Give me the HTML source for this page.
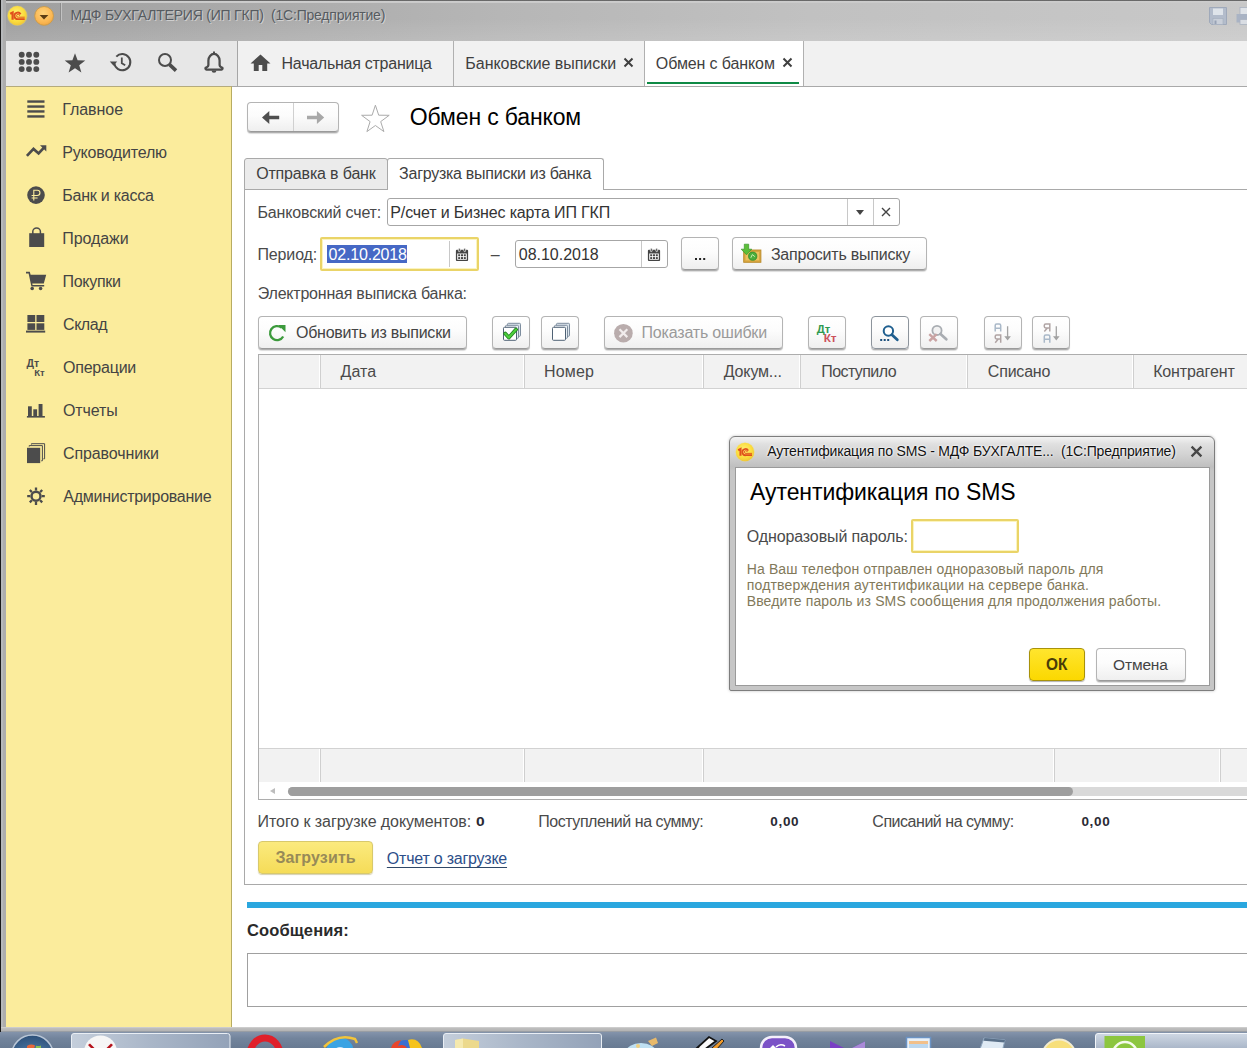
<!DOCTYPE html>
<html><head><meta charset="utf-8">
<style>
*{box-sizing:border-box;margin:0;padding:0}
html,body{width:1247px;height:1048px;overflow:hidden;background:#fff}
body{font-family:"Liberation Sans",sans-serif;font-size:16px;color:#4a4a4a;position:relative}
.a{position:absolute}
.t{position:absolute;white-space:nowrap;line-height:20px}
/* window chrome */
#titlebar{left:0;top:0;width:1247px;height:41px;background:linear-gradient(rgba(255,255,255,0) 0,rgba(255,255,255,.0) 45%,rgba(255,255,255,.12) 100%),linear-gradient(to right,#9f9f9f 0,#a9a9a9 18%,#b6b6b6 40%,#c1c1c1 65%,#c8c8c8 100%)}
#topline{left:0;top:0;width:1247px;height:3px;background:linear-gradient(#666 0,#6c6c6c 1.200px,#cdcdcd 1.200px,#cacaca 2.500px,rgba(200,200,200,0) 3px)}
#lborder{left:0;top:0;width:6px;height:1032px;background:linear-gradient(to right,#1a1a1a 0,#1a1a1a 1.200px,#b6b8ba 1.200px,#b6b8ba 3px,#adadad 3px)}
#lborder2{left:0;top:0;width:2px;height:1032px;background:#3c3c3c}
#toolbar{left:6px;top:41px;width:1241px;height:46px;background:#f1f1f1;border-bottom:1px solid #a9a9a9}
#tbleft{left:6px;top:41px;width:232px;height:45px;background:#e7e7e7;border-right:1px solid #a6a6a6}
#sidebar{left:6px;top:86px;width:226px;height:941px;background:#fbec9c;border-right:1px solid #b8ac62;border-top:1px solid #b5ab7c}
.mi{position:absolute;left:63px;white-space:nowrap;line-height:20px;font-size:16px;color:#444}
.btn{position:absolute;border:1px solid #b4b4b4;border-bottom-color:#9a9a9a;border-radius:4px;background:linear-gradient(#ffffff 0,#fcfcfc 45%,#efefef 100%);box-shadow:0 1px 0 rgba(0,0,0,.2),0 1.500px 1px rgba(0,0,0,.14)}
.fld{position:absolute;border:1px solid #a6a6a6;border-radius:3px;background:#fff}
</style></head><body>
<!-- chrome -->
<div class="a" id="titlebar"></div>
<div class="a" id="topline"></div>
<div class="a" id="toolbar"></div>
<div class="a" id="tbleft"></div>
<div class="a" id="sidebar"></div>
<div class="a" id="lborder"></div>


<!-- title bar content -->
<svg class="a" style="left:0;top:0" width="70" height="34" viewBox="0 0 70 34">
<defs>
<radialGradient id="g1c" cx=".45" cy=".4" r=".6"><stop offset="0" stop-color="#fff27a"/><stop offset=".7" stop-color="#fbdc3c"/><stop offset="1" stop-color="#efc63a"/></radialGradient>
<radialGradient id="gor" cx=".45" cy=".35" r=".65"><stop offset="0" stop-color="#ffd27a"/><stop offset=".75" stop-color="#fbb752"/><stop offset="1" stop-color="#f1a844"/></radialGradient>
</defs>
<circle cx="17.300" cy="15.700" r="10.300" fill="#f7e36a" opacity=".35"/>
<circle cx="17.300" cy="15.700" r="9.600" fill="url(#g1c)"/>
<g fill="none" stroke="#e0501c">
<path d="M10.200 13.800L12.600 12.500V19.700" stroke-width="2.200" stroke-linejoin="miter"/>
<path d="M20.600 14.200A3.300 3.300 0 1 0 18.200 19.100H24.700" stroke-width="1.900"/>
<path d="M19.600 15.800A1.500 1.500 0 1 0 18.300 17.200H24.700" stroke-width=".9"/>
</g>
<circle cx="44.100" cy="15.900" r="9.400" fill="url(#gor)" stroke="#c99a48" stroke-width=".9"/>
<path d="M39.600 14.900H48.400L44 19.500Z" fill="#5c3d14"/>
<path d="M60.500 3V21" stroke="#8c8c8c" stroke-width="1"/>
<path d="M61.500 3V21" stroke="#c2c2c2" stroke-width="1"/>
</svg>
<div class="t" style="left:70.38px;top:4.80px;letter-spacing:-0.210px;font-size:14px;color:#565b60;text-shadow:1px 1px 0 rgba(225,225,225,.7)">МДФ БУХГАЛТЕРИЯ (ИП ГКП)&nbsp; (1С:Предприятие)</div>


<svg class="a" style="left:1205px;top:4px" width="42" height="26" viewBox="1205 4 42 26">
<path d="M1209.500 7.500H1226.500V24.500H1211.500L1209.500 22.500Z" fill="#b3bccb" stroke="#9fa9ba" stroke-width="1"/>
<rect x="1213" y="8.500" width="10" height="6.500" fill="#dfe4ea"/>
<rect x="1213" y="18.500" width="10" height="6" fill="#c9cfd9" stroke="#a4adbd" stroke-width=".6"/>
<rect x="1214.500" y="20.500" width="2" height="3.500" fill="#97a2b5"/>
<rect x="1240" y="7.500" width="8" height="7" fill="#dfe3e8" stroke="#aab2c0" stroke-width=".8"/>
<rect x="1236.500" y="14" width="12" height="8.500" fill="#a9b3c4"/>
<rect x="1240" y="19.500" width="8" height="5" fill="#d9dde3" stroke="#aab2c0" stroke-width=".8"/>
</svg>
<!-- tabs row -->
<div class="a" style="left:453px;top:41px;width:1px;height:45px;background:#b0b0b0"></div>
<div class="a" style="left:644px;top:41px;width:1px;height:45px;background:#b0b0b0"></div>
<div class="a" style="left:803px;top:41px;width:1px;height:45px;background:#b0b0b0"></div>
<div class="a" style="left:645px;top:41px;width:158px;height:45px;background:#fff"></div>
<div class="a" style="left:647px;top:82px;width:152px;height:2px;background:#0f8a45"></div>
<div class="t" style="left:281.55px;top:53.80px;letter-spacing:-0.260px;color:#3f3f3f">Начальная страница</div>
<div class="t" style="left:465.35px;top:53.80px;letter-spacing:-0.043px;color:#3f3f3f">Банковские выписки</div>
<div class="t" style="left:655.85px;top:53.80px;letter-spacing:-0.110px;color:#3f3f3f">Обмен с банком</div>

<!-- sidebar items -->
<div class="mi" style="left:62.25px;top:99.80px;letter-spacing:-0.058px">Главное</div>
<div class="mi" style="left:62.25px;top:142.80px;letter-spacing:-0.170px">Руководителю</div>
<div class="mi" style="left:62.25px;top:185.80px;letter-spacing:-0.227px">Банк и касса</div>
<div class="mi" style="left:62.25px;top:228.80px;letter-spacing:-0.067px">Продажи</div>
<div class="mi" style="left:62.55px;top:271.80px;letter-spacing:-0.296px">Покупки</div>
<div class="mi" style="left:63.05px;top:314.80px;letter-spacing:-0.462px">Склад</div>
<div class="mi" style="left:63.05px;top:357.80px;letter-spacing:-0.229px">Операции</div>
<div class="mi" style="left:63.05px;top:400.80px;letter-spacing:-0.140px">Отчеты</div>
<div class="mi" style="left:63.05px;top:443.80px;letter-spacing:-0.112px">Справочники</div>
<div class="mi" style="left:63.30px;top:486.80px;letter-spacing:-0.267px">Администрирование</div>


<!-- top toolbar icons -->
<svg class="a" style="left:6px;top:41px" width="440" height="46" viewBox="6 41 440 46">
<g fill="#4c4c4c">
<circle cx="21.7" cy="54.7" r="2.950"/><circle cx="21.7" cy="61.9" r="2.950"/><circle cx="21.7" cy="69.1" r="2.950"/><circle cx="29" cy="54.7" r="2.950"/><circle cx="29" cy="61.9" r="2.950"/><circle cx="29" cy="69.1" r="2.950"/><circle cx="36.3" cy="54.7" r="2.950"/><circle cx="36.3" cy="61.9" r="2.950"/><circle cx="36.3" cy="69.1" r="2.950"/>
<path d="M75 53.3L77.6 60.3L85.3 60.6L79.2 65.3L81.4 72.6L75 68.3L68.6 72.6L70.8 65.3L64.7 60.6L72.4 60.3Z"/>
</g>
<g fill="none" stroke="#4c4c4c" stroke-width="2">
<path d="M114.2 63.2A8.1 8.1 0 1 0 116.3 56.6"/>
<path d="M121.8 57.6V63.2L125.2 65.3" stroke-width="1.8"/>
<circle cx="165" cy="60" r="6"/>
<path d="M169.6 64.6L176 70.6" stroke-width="3.6"/>
<path d="M208.400 60.600A5.600 6.600 0 0 1 219.600 60.600V64.800Q219.600 66.800 221.600 67.300A1.100 1.100 0 0 1 221.400 69.500H206.600A1.100 1.100 0 0 1 206.400 67.300Q208.400 66.800 208.400 64.800Z" stroke-linejoin="round" stroke-width="2.250"/>
</g>
<g fill="#4c4c4c">
<path d="M109.800 61.400H117.200L113.500 65.800Z"/>
<path d="M211.6 70.4H216.4A2.4 2.400 0 0 1 211.600 70.400Z"/>
<path d="M213 51.6H215V54H213Z"/>
<path d="M260.500 54.500L270.500 63.400H267.200V70.900H262.300V65H258.700V70.900H253.800V63.400H250.500Z"/>
</g>
</svg>

<!-- sidebar icons -->
<svg class="a" style="left:20px;top:92px" width="40" height="430" viewBox="20 92 40 430">
<g fill="#4c4c4c">
<rect x="27.300" y="100.350" width="17.200" height="2.400"/><rect x="27.300" y="105.350" width="17.200" height="2.400"/><rect x="27.300" y="110.250" width="17.200" height="2.400"/><rect x="27.300" y="115.250" width="17.200" height="2.400"/>
<path d="M40 145.200H46.300V151.500Z"/>
<circle cx="36" cy="195.100" r="8.800"/>
<path d="M29.200 233.200H44.200V247H29.200Z"/>
<path d="M26 271.800H29.800L30.600 274.700H46.200L43.800 283.400H32.200L32.600 284.900H44.200V286.400H31.400L28.600 273.400H26Z"/>
<circle cx="32.200" cy="288.500" r="1.800"/><circle cx="40.600" cy="288.500" r="1.800"/>
<rect x="27.400" y="315" width="7.800" height="7"/><rect x="36.500" y="315" width="7.800" height="7"/><rect x="27.400" y="323.300" width="7.800" height="6.600"/><rect x="36.500" y="323.300" width="7.800" height="6.600"/><rect x="26" y="330.600" width="19.200" height="2"/>
<rect x="28" y="406.300" width="3.800" height="10"/><rect x="33.300" y="409.300" width="3.800" height="7"/><rect x="38.600" y="404" width="3.900" height="12.300"/><rect x="26.900" y="416" width="18" height="1.600"/>
<rect x="27" y="447.800" width="13.200" height="15.300"/>
</g>
<g fill="none" stroke="#4c4c4c">
<path d="M26.900 155.900L33.500 148.900L38.600 153.400L44 147.600" stroke-width="2.700"/>
<path d="M32.800 234.500V231.500A3.700 3.400 0 0 1 40.400 231.500V234.500" stroke-width="1.500"/>
<path d="M29.200 446.600V445.600H42.400V460.800H41.200" stroke-width="1"/>
<path d="M31.400 444.600V443.700H44.600V458.800H43.400" stroke-width="1"/>
<circle cx="36" cy="496.200" r="4.500" stroke-width="2.500"/>
<path d="M36 487.400V490.400M36 502V505M27.200 496.200H30.200M41.800 496.200H44.800M29.800 490L31.900 492.100M40.100 500.300L42.200 502.400M42.200 490L40.100 492.100M31.900 500.300L29.800 502.400" stroke-width="2.300"/>
</g>
<g fill="none" stroke="#fbec9c" stroke-width="1.100">
<path d="M33.800 200.600V190.200H37.300A2.600 2.600 0 0 1 37.300 195.500H31.600M31.600 198H37.600"/>
</g>
<text x="26.500" y="367.300" font-family="Liberation Sans" font-weight="700" font-size="10.500" fill="#4c4c4c">Дт</text>
<text x="34.300" y="376.200" font-family="Liberation Sans" font-weight="700" font-size="9.500" fill="#4c4c4c">Кт</text>
</svg>

<!-- page header -->
<div class="btn" style="left:247px;top:102px;width:92px;height:30px"></div>
<div class="a" style="left:293px;top:103px;width:1px;height:28px;background:#d0d0d0"></div>
<div class="t" style="left:409.77px;top:103.80px;letter-spacing:-0.138px;font-size:23px;line-height:26px;color:#000">Обмен с банком</div>


<!-- form tabs -->
<div class="a" style="left:244px;top:189px;width:1003px;height:696px;border:1px solid #a9a9a9;border-right:none"></div>
<div class="a" style="left:244px;top:158px;width:144px;height:32px;background:#ebebeb;border:1px solid #a9a9a9;border-radius:3px 3px 0 0"></div>
<div class="a" style="left:387px;top:158px;width:217px;height:32px;background:#fff;border:1px solid #a9a9a9;border-bottom:none;border-radius:3px 3px 0 0"></div>
<div class="t" style="left:256.15px;top:163.80px;letter-spacing:-0.161px;color:#3f3f3f">Отправка в банк</div>
<div class="t" style="left:399.10px;top:163.80px;letter-spacing:-0.264px;color:#3f3f3f">Загрузка выписки из банка</div>

<!-- bank account row -->
<div class="t" style="left:257.55px;top:203.00px;letter-spacing:-0.173px">Банковский счет:</div>
<div class="fld" style="left:387px;top:198px;width:513px;height:28px"></div>
<div class="a" style="left:847px;top:199px;width:1px;height:26px;background:#c8c8c8"></div>
<div class="a" style="left:873px;top:199px;width:1px;height:26px;background:#c8c8c8"></div>
<div class="t" style="left:390.35px;top:203.00px;letter-spacing:-0.152px;color:#333">Р/счет и Бизнес карта ИП ГКП</div>
<div class="a" style="left:856px;top:210px;width:0;height:0;border-left:4px solid transparent;border-right:4px solid transparent;border-top:5px solid #444"></div>
<svg class="a" style="left:880px;top:206px" width="12" height="12" viewBox="0 0 12 12"><path d="M2 2L10 10M10 2L2 10" stroke="#444" stroke-width="1.4" fill="none"/></svg>

<!-- period row -->
<div class="t" style="left:257.45px;top:244.80px;letter-spacing:-0.129px">Период:</div>
<div class="a" style="left:320px;top:237px;width:159px;height:34px;border:2px solid #ead468;background:#fff;border-radius:2px;box-shadow:inset 0 0 0 1px #fbf4c0"></div>
<div class="a" style="left:327px;top:245px;width:80px;height:18px;background:#4668c5"></div>
<div class="t" style="left:328.57px;top:244.80px;letter-spacing:-0.194px;color:#fff">02.10.2018</div>
<div class="a" style="left:449px;top:241px;width:1px;height:26px;background:#c8c8c8"></div>
<div class="t" style="left:490.800px;top:244.600px">–</div>
<div class="fld" style="left:515px;top:240px;width:153px;height:28px"></div>
<div class="a" style="left:641px;top:241px;width:1px;height:26px;background:#c8c8c8"></div>
<div class="t" style="left:518.77px;top:244.80px;letter-spacing:-0.017px;color:#333">08.10.2018</div>
<div class="btn" style="left:681px;top:237px;width:38px;height:33px"></div>
<div class="a" style="left:695px;top:257.700px;width:2.200px;height:2.300px;background:#222;box-shadow:4.100px 0 0 #222,8.200px 0 0 #222"></div>
<div class="btn" style="left:732px;top:237px;width:195px;height:33px"></div>
<div class="t" style="left:770.90px;top:244.80px;letter-spacing:-0.216px;color:#444">Запросить выписку</div>

<div class="t" style="left:257.82px;top:283.80px;letter-spacing:-0.219px">Электронная выписка банка:</div>

<!-- toolbar buttons -->
<div class="btn" style="left:258px;top:316px;width:209px;height:33px"></div>
<div class="t" style="left:295.95px;top:322.80px;letter-spacing:-0.236px;color:#444">Обновить из выписки</div>
<div class="btn" style="left:492px;top:316px;width:38px;height:33px"></div>
<div class="btn" style="left:541px;top:316px;width:38px;height:33px"></div>
<div class="btn" style="left:604px;top:316px;width:179px;height:33px"></div>
<div class="t" style="left:641.55px;top:322.80px;letter-spacing:-0.191px;color:#9a9a9a">Показать ошибки</div>
<div class="btn" style="left:808px;top:316px;width:38px;height:33px"></div>
<div class="btn" style="left:871px;top:316px;width:38px;height:33px;border-color:#8d949c"></div>
<div class="btn" style="left:920px;top:316px;width:38px;height:33px"></div>
<div class="btn" style="left:984px;top:316px;width:38px;height:33px"></div>
<div class="btn" style="left:1032px;top:316px;width:38px;height:33px"></div>

<!-- table -->
<div class="a" style="left:258px;top:354px;width:989px;height:446px;border:1px solid #adadad;border-right:none"></div>
<div class="a" style="left:259px;top:355px;width:988px;height:34px;background:#f2f2f2;border-bottom:1px solid #d2d2d2"></div>
<div class="a" style="left:259px;top:748px;width:988px;height:34px;background:#f2f2f2;border-top:1px solid #d2d2d2"></div>
<div class="t" style="left:340.48px;top:361.80px;letter-spacing:0.108px">Дата</div>
<div class="t" style="left:544.05px;top:361.80px;letter-spacing:0.181px">Номер</div>
<div class="t" style="left:723.77px;top:361.80px;letter-spacing:-0.161px">Докум...</div>
<div class="t" style="left:821.25px;top:361.80px;letter-spacing:-0.575px">Поступило</div>
<div class="t" style="left:987.85px;top:361.80px;letter-spacing:-0.212px">Списано</div>
<div class="t" style="left:1153.15px;top:361.80px;letter-spacing:-0.128px">Контрагент</div>
<div class="a" style="left:319px;top:355px;width:1px;height:33px;background:#fff"></div>
<div class="a" style="left:320px;top:355px;width:1px;height:33px;background:#cfcfcf"></div>
<div class="a" style="left:523px;top:355px;width:1px;height:33px;background:#fff"></div>
<div class="a" style="left:524px;top:355px;width:1px;height:33px;background:#cfcfcf"></div>
<div class="a" style="left:702px;top:355px;width:1px;height:33px;background:#fff"></div>
<div class="a" style="left:703px;top:355px;width:1px;height:33px;background:#cfcfcf"></div>
<div class="a" style="left:799px;top:355px;width:1px;height:33px;background:#fff"></div>
<div class="a" style="left:800px;top:355px;width:1px;height:33px;background:#cfcfcf"></div>
<div class="a" style="left:966px;top:355px;width:1px;height:33px;background:#fff"></div>
<div class="a" style="left:967px;top:355px;width:1px;height:33px;background:#cfcfcf"></div>
<div class="a" style="left:1132px;top:355px;width:1px;height:33px;background:#fff"></div>
<div class="a" style="left:1133px;top:355px;width:1px;height:33px;background:#cfcfcf"></div>
<div class="a" style="left:319px;top:749px;width:1px;height:33px;background:#fff"></div>
<div class="a" style="left:320px;top:749px;width:1px;height:33px;background:#cfcfcf"></div>
<div class="a" style="left:523px;top:749px;width:1px;height:33px;background:#fff"></div>
<div class="a" style="left:524px;top:749px;width:1px;height:33px;background:#cfcfcf"></div>
<div class="a" style="left:702px;top:749px;width:1px;height:33px;background:#fff"></div>
<div class="a" style="left:703px;top:749px;width:1px;height:33px;background:#cfcfcf"></div>
<div class="a" style="left:1053px;top:749px;width:1px;height:33px;background:#fff"></div>
<div class="a" style="left:1054px;top:749px;width:1px;height:33px;background:#cfcfcf"></div>
<div class="a" style="left:1219px;top:749px;width:1px;height:33px;background:#fff"></div>
<div class="a" style="left:1220px;top:749px;width:1px;height:33px;background:#cfcfcf"></div>

<!-- scrollbar -->
<div class="a" style="left:259px;top:782px;width:988px;height:17px;background:#fff"></div>
<div class="a" style="left:288px;top:787px;width:959px;height:9px;background:#d9d9d9;border-radius:5px 0 0 5px"></div>
<div class="a" style="left:288px;top:787px;width:785px;height:9px;background:#9e9e9e;border-radius:5px"></div>
<div class="a" style="left:270px;top:788px;width:0;height:0;border-top:3px solid transparent;border-bottom:3px solid transparent;border-right:5px solid #bdbdbd"></div>

<!-- totals -->
<div class="t" style="left:257.55px;top:811.90px;letter-spacing:-0.069px">Итого к загрузке документов:</div>
<div class="t" style="left:475.90px;top:811.70px;letter-spacing:0.000px;font-weight:700;font-size:13.7px;transform:scaleX(1.14);transform-origin:0 0;color:#2a2a34">0</div>
<div class="t" style="left:538.25px;top:811.90px;letter-spacing:-0.454px">Поступлений на сумму:</div>
<div class="t" style="left:770.30px;top:811.60px;letter-spacing:0.683px;font-weight:700;font-size:13.5px;color:#2a2a34">0,00</div>
<div class="t" style="left:872.35px;top:811.90px;letter-spacing:-0.472px">Списаний на сумму:</div>
<div class="t" style="left:1081.40px;top:811.60px;letter-spacing:0.683px;font-weight:700;font-size:13.5px;color:#2a2a34">0,00</div>

<div class="a" style="left:258px;top:841px;width:115px;height:33px;border:1px solid #d8c96c;border-radius:4px;background:linear-gradient(#fbea7e,#f5dc58);box-shadow:0 1px 1px rgba(120,100,0,.3)"></div>
<div class="t" style="left:275.43px;top:847.80px;letter-spacing:0.119px;font-weight:700;color:#978a58">Загрузить</div>
<div class="t" style="left:386.85px;top:848.80px;letter-spacing:-0.225px;color:#2d4f8a;text-decoration:underline;text-decoration-thickness:1px;text-underline-offset:2.600px;text-decoration-skip-ink:none;text-decoration-color:#2f4868">Отчет о загрузке</div>

<!-- messages -->
<div class="a" style="left:247px;top:902px;width:1000px;height:6px;background:#2aa7df"></div>
<div class="t" style="left:247.07px;top:920.00px;letter-spacing:0.125px;font-weight:700;font-size:16.5px;color:#2a2a2a">Сообщения:</div>
<div class="a" style="left:247px;top:953px;width:1000px;height:54px;border:1px solid #a0a0a0;border-right:none"></div>



<!-- form icons -->
<svg class="a" style="left:240px;top:95px" width="1007" height="260" viewBox="240 95 1007 260">
<path d="M262 117.500L269.300 111V115.700H279.200V119.300H269.300V124Z" fill="#4f4f4f"/>
<path d="M324.200 117.500L316.900 111V115.700H307V119.300H316.900V124Z" fill="#a8a8a8"/>
<path d="M375.400 105.200L378.700 115.200L389.200 115.300L380.700 121.600L383.900 131.600L375.400 125.500L366.900 131.600L370.100 121.600L361.600 115.300L372.100 115.200Z" fill="#fff" stroke="#ababab" stroke-width="1"/>
<g transform="translate(455.9 248.2)" fill="#444"><path d="M0 2.600A1 1 0 0 1 1 1.600H11.200A1 1 0 0 1 12.200 2.600V11.800A1 1 0 0 1 11.200 12.800H1A1 1 0 0 1 0 11.800ZM1.300 5.200V11.500H10.900V5.200Z" fill-rule="evenodd"/><rect x="2.500" y="0" width="1.800" height="3.400" rx=".8" stroke="#fff" stroke-width=".7"/><rect x="7.900" y="0" width="1.800" height="3.400" rx=".8" stroke="#fff" stroke-width=".7"/><rect x="2.300" y="6.100" width="2" height="1.900"/><rect x="5.100" y="6.100" width="2" height="1.900"/><rect x="7.900" y="6.100" width="2" height="1.900"/><rect x="2.300" y="8.900" width="2" height="1.900"/><rect x="5.100" y="8.900" width="2" height="1.900"/><rect x="7.900" y="8.900" width="2" height="1.900"/></g>
<g transform="translate(647.9 248.2)" fill="#444"><path d="M0 2.600A1 1 0 0 1 1 1.600H11.200A1 1 0 0 1 12.200 2.600V11.800A1 1 0 0 1 11.200 12.800H1A1 1 0 0 1 0 11.800ZM1.300 5.200V11.500H10.900V5.200Z" fill-rule="evenodd"/><rect x="2.500" y="0" width="1.800" height="3.400" rx=".8" stroke="#fff" stroke-width=".7"/><rect x="7.900" y="0" width="1.800" height="3.400" rx=".8" stroke="#fff" stroke-width=".7"/><rect x="2.300" y="6.100" width="2" height="1.900"/><rect x="5.100" y="6.100" width="2" height="1.900"/><rect x="7.900" y="6.100" width="2" height="1.900"/><rect x="2.300" y="8.900" width="2" height="1.900"/><rect x="5.100" y="8.900" width="2" height="1.900"/><rect x="7.900" y="8.900" width="2" height="1.900"/></g>
<!-- envelope icon -->
<rect x="743.700" y="250" width="17.200" height="12.300" fill="#d9a63f" stroke="#b98a2a" stroke-width=".9"/>
<rect x="745.500" y="252" width="13.600" height="8.400" fill="#ecc765" opacity=".85"/>
<circle cx="752.700" cy="256.200" r="4.100" fill="#4cae3c" stroke="#2f8a28" stroke-width=".8"/>
<path d="M750.800 257.800L752.300 254.600L754.800 256.600" fill="none" stroke="#c9f0b0" stroke-width="1"/>
<path d="M744.300 244.200H748.700V249.200H751.800L746.500 254.800L741.200 249.200H744.300Z" fill="#5cbf3a" stroke="#3a962a" stroke-width=".7"/>
<!-- refresh -->
<path d="M283.200 336.500A7 7 0 1 1 281.500 327.700" fill="none" stroke="#3c9a3c" stroke-width="2.300"/>
<path d="M278.200 324.900H285.500V332.200Z" fill="#3c9a3c"/>
<g transform="translate(503 327.8)" stroke="#7d8d9e" stroke-width="1" fill="#eef3f8"><rect x="4.500" y="-4.500" width="13" height="13" rx="1" fill="#dbe4ec"/><rect x="2.500" y="-2.500" width="13" height="13" rx="1" fill="#e8eef3"/><rect x=".5" y="-.5" width="13" height="13" rx="1" fill="#fff" stroke="#4f6275"/></g>
<path d="M505.200 333.600L508.800 337.600L516 329.600" fill="none" stroke="#1f7d1f" stroke-width="3.800" stroke-linecap="round" stroke-linejoin="round"/>
<path d="M505.200 333.600L508.800 337.600L516 329.600" fill="none" stroke="#4ccf3c" stroke-width="2.200" stroke-linecap="round" stroke-linejoin="round"/>
<g transform="translate(552 327.8)" stroke="#7d8d9e" stroke-width="1" fill="#eef3f8"><rect x="4.500" y="-4.500" width="13" height="13" rx="1" fill="#dbe4ec"/><rect x="2.500" y="-2.500" width="13" height="13" rx="1" fill="#e8eef3"/><rect x=".5" y="-.5" width="13" height="13" rx="1" fill="#fff" stroke="#4f6275"/></g>
<!-- error -->
<circle cx="623.400" cy="333.200" r="9.300" fill="#b9acac"/>
<path d="M619.500 329.300L627.300 337.100M627.300 329.300L619.500 337.100" stroke="#f1ecec" stroke-width="2.200" fill="none"/>
<!-- DtKt -->
<text x="816.800" y="333.100" font-family="Liberation Sans" font-weight="700" font-size="11.200" fill="#2f9a50">Дт</text>
<text x="823.600" y="342.100" font-family="Liberation Sans" font-weight="700" font-size="11" fill="#cc525c" transform="translate(-57.600 0) scale(1.070 1)">Кт</text>
<!-- search -->
<circle cx="888.400" cy="331" r="4.700" fill="#fff" stroke="#1f5f8f" stroke-width="2"/>
<path d="M891.900 334.700L897.300 339.700" stroke="#1f5f8f" stroke-width="2.800" stroke-linecap="round"/>
<rect x="880.200" y="339" width="2" height="2" fill="#1c4f7c"/><rect x="883.700" y="339" width="2" height="2" fill="#1c4f7c"/><rect x="887.200" y="339" width="2" height="2" fill="#1c4f7c"/>
<!-- search cancel -->
<circle cx="937" cy="330.400" r="4.600" fill="#f2f2f2" stroke="#a9adb2" stroke-width="1.800"/>
<path d="M940.500 334L946.300 339.200" stroke="#a9adb2" stroke-width="2.800" stroke-linecap="round"/>
<path d="M929.300 334.200L936.700 341M936.700 334.200L929.300 341" stroke="#c9a3a3" stroke-width="2.400"/>
<!-- sort -->
<g fill="none" stroke-width="1.500">
<path d="M995.200 331.600V325.400Q995.200 324 996.600 324H999.300Q1000.700 324 1000.700 325.400V331.600M995.200 328.200H1000.700" stroke="#a9b8c8"/>
<path d="M1000.700 342.700V335H996.600Q995.200 335 995.200 336.400V337.600Q995.200 339 996.600 339H1000.700M998.300 339L995.200 342.700" stroke="#b0a4a4"/>
<path d="M1049.800 331.600V323.900H1045.700Q1044.300 323.900 1044.300 325.300V326.500Q1044.300 327.900 1045.700 327.900H1049.800M1047.400 327.900L1044.300 331.600" stroke="#b0a4a4"/>
<path d="M1044.300 342.700V336.500Q1044.300 335.100 1045.700 335.100H1048.400Q1049.800 335.100 1049.800 336.500V342.700M1044.300 339.300H1049.800" stroke="#a9b8c8"/>
<path d="M1007.600 326.200V337M1056.300 326.200V337" stroke="#a3a3a3" stroke-width="1.300"/>
</g>
<path d="M1004.300 336.300H1010.900L1007.600 340.400ZM1053 336.300H1059.600L1056.300 340.400Z" fill="#a3a3a3"/>
</svg>
<!-- tab close marks -->
<svg class="a" style="left:620px;top:55px" width="180" height="16" viewBox="620 55 180 16"><path d="M624.500 58.500L632.500 66.500M632.500 58.500L624.500 66.500M783.500 58.500L791.500 66.500M791.500 58.500L783.500 66.500" stroke="#3f3f3f" stroke-width="2" fill="none"/></svg>

<!-- dialog -->
<div class="a" id="dlg" style="left:729px;top:436px;width:486px;height:255px;border:1px solid #7d7d7d;border-radius:6px 6px 2px 2px;background:linear-gradient(#f3f3f3 0,#e0e0e0 7px,#d3d3d3 17px,#bfbfbf 30px,#c6c6c6 34px,#c6c6c6 100%);box-shadow:0 0 3px rgba(0,0,0,.25)"></div>
<div class="a" style="left:735px;top:467px;width:475px;height:219px;background:#fff;border:1px solid #9a9a9a"></div>
<svg class="a" style="left:733px;top:440px" width="24" height="24" viewBox="-12 -12 24 24">
<circle cx="0" cy="0" r="9.800" fill="#f7e36a" opacity=".35"/>
<circle cx="0" cy="0" r="9.200" fill="url(#g1c)"/>
<g fill="none" stroke="#e0501c">
<path d="M-6.800 -1.800L-4.500 -3V3.800" stroke-width="2.100"/>
<path d="M3.200 -1.400A3.100 3.100 0 1 0 0.900 3.200H7" stroke-width="1.800"/>
<path d="M2.200 .1A1.400 1.400 0 1 0 1 1.400H7" stroke-width=".9"/>
</g>
</svg>
<div class="t" style="left:767.17px;top:440.90px;letter-spacing:-0.162px;font-size:14px;color:#111;text-shadow:0 0 3px #fff,0 0 2px #fff">Аутентификация по SMS - МДФ БУХГАЛТЕ...&nbsp; (1С:Предприятие)</div>
<svg class="a" style="left:1189.800px;top:444.700px" width="13" height="13" viewBox="0 0 13 13"><path d="M1.600 1.600L11.400 11.400M11.400 1.600L1.600 11.400" stroke="#474747" stroke-width="2.300" fill="none"/></svg>
<div class="t" style="left:750.00px;top:478.80px;letter-spacing:-0.076px;font-size:23px;line-height:26px;color:#000">Аутентификация по SMS</div>
<div class="t" style="left:746.75px;top:526.80px;letter-spacing:-0.118px">Одноразовый пароль:</div>
<div class="a" style="left:911px;top:519px;width:108px;height:34px;border:2px solid #ead468;background:#fff;border-radius:2px;box-shadow:inset 0 0 0 1px #fbf4c0"></div>
<div class="t" style="left:746.67px;top:560.80px;letter-spacing:0.146px;font-size:14px;line-height:16px;color:#82795a">На Ваш телефон отправлен одноразовый пароль для</div>
<div class="t" style="left:746.80px;top:576.80px;letter-spacing:0.171px;font-size:14px;line-height:16px;color:#82795a">подтверждения аутентификации на сервере банка.</div>
<div class="t" style="left:746.67px;top:592.80px;letter-spacing:0.131px;font-size:14px;line-height:16px;color:#82795a">Введите пароль из SMS сообщения для продолжения работы.</div>
<div class="a" style="left:1029px;top:648px;width:56px;height:33px;border:1px solid #a8920a;border-radius:4px;background:linear-gradient(#ffe52e,#fbd800);box-shadow:0 1px 1px rgba(0,0,0,.3)"></div>
<div class="t" style="left:1046.050px;top:654.250px;font-weight:700;font-size:16.5px;transform:scaleX(.935);transform-origin:0 0;color:#4a3c08">ОК</div>
<div class="btn" style="left:1096px;top:648px;width:90px;height:33px"></div>
<div class="t" style="left:1113.05px;top:654.80px;letter-spacing:-0.155px;font-size:15.5px;color:#444">Отмена</div>

<!-- bottom chrome -->
<div class="a" style="left:0;top:1027px;width:1247px;height:5px;background:linear-gradient(#d4d4d4 0,#bdbdbd 1.500px,#b3b3b3 4px,#7d8794 5px)"></div>
<div class="a" style="left:0;top:1027px;width:1.200px;height:5px;background:#1a1a1a"></div>
<div class="a" id="taskbar" style="left:0;top:1032px;width:1247px;height:16px;background:linear-gradient(#8494ab 0,#72849c 40%,#687a92 100%);overflow:hidden">
<svg width="1247" height="16" viewBox="0 1032 1247 16" style="position:absolute;left:0;top:0">
<defs>
<linearGradient id="tb" x1="0" y1="0" x2="0" y2="1"><stop offset="0" stop-color="#cfd8e4"/><stop offset="1" stop-color="#9dabbf"/></linearGradient>
<linearGradient id="tb2" x1="0" y1="0" x2="1" y2="0"><stop offset="0" stop-color="#c4cedb"/><stop offset=".5" stop-color="#a9b6c8"/><stop offset="1" stop-color="#93a2b8"/></linearGradient>
<radialGradient id="orb" cx=".5" cy=".9" r=".9"><stop offset="0" stop-color="#6fa8d8"/><stop offset="1" stop-color="#2d4f78"/></radialGradient>
</defs>
<!-- start orb -->
<circle cx="32.500" cy="1056" r="21" fill="url(#orb)" stroke="#b9c6d6" stroke-width="1.500"/>
<path d="M27 1046Q31 1043.500 35 1045.500L34 1049H27Z" fill="#e8683a"/><path d="M36 1045.800Q39 1046.500 41 1045.500V1049H35.500Z" fill="#8cc152"/>
<!-- task btn 1 -->
<rect x="71.500" y="1033.500" width="158.500" height="20" rx="2.500" fill="url(#tb2)" stroke="#e9eef4" stroke-width="1"/>
<circle cx="100.500" cy="1052" r="16.500" fill="#f6f6f6"/>
<path d="M90 1043.500L94.500 1048H91L88 1045ZM111 1043.500L106.500 1048H110L113 1045Z" fill="#b5121b"/>
<!-- opera -->
<ellipse cx="265" cy="1055" rx="15" ry="17" fill="none" stroke="#e0202a" stroke-width="7"/>
<!-- IE -->
<circle cx="340" cy="1051" r="13.500" fill="#3aa3e3"/>
<path d="M324 1047Q338 1033 355 1039L357 1043" fill="none" stroke="#f2c43a" stroke-width="2.500"/>
<circle cx="340" cy="1054" r="7" fill="#cfe8f8"/>
<!-- firefox -->
<circle cx="406" cy="1054" r="14" fill="#3b6fd0"/>
<path d="M391 1048Q393 1041 401 1040L398 1046Q404 1043 407 1048H391Z" fill="#e8452a"/>
<path d="M408 1040Q418 1037 422 1048H410Z" fill="#f6c31c"/>
<!-- task btn 2 -->
<rect x="443.500" y="1033.500" width="158" height="20" rx="2.500" fill="url(#tb2)" stroke="#e9eef4" stroke-width="1"/>
<path d="M455 1040L463 1038.500L479 1041V1052H455Z" fill="#ecd98c"/><path d="M455 1040L463 1038.500V1052H455Z" fill="#f5e9ae"/>
<!-- fish-like icon -->
<ellipse cx="641" cy="1052" rx="15" ry="9" fill="#bfe0f2"/><path d="M648 1041L656 1037.500L658 1043L652 1046Z" fill="#e8b96a"/><circle cx="638" cy="1046" r="2" fill="#f0d080"/>
<!-- pen icon -->
<path d="M697 1048L709 1037L716 1041L704 1050Z" fill="#fafafa" stroke="#111" stroke-width="1.800"/><path d="M712 1048L722 1039L724 1041L716 1050Z" fill="#f09a2a" stroke="#222" stroke-width="1"/>
<!-- viber -->
<rect x="761" y="1037" width="35" height="24" rx="11" fill="#7b52c7" stroke="#f4f0fb" stroke-width="2.500"/>
<path d="M776 1047Q780 1043 785 1046" fill="none" stroke="#fff" stroke-width="1.500"/><path d="M770 1048L773 1045L776 1048Z" fill="#fff"/>
<!-- VS -->
<path d="M830 1041L848 1050L865 1041.500V1052H830Z" fill="#7a3fc4"/><path d="M850 1049L865 1041.500V1052H850Z" fill="#a98ad8"/>
<!-- picture window -->
<rect x="906.500" y="1037.500" width="24" height="14" fill="#e9f1f8" stroke="#6b93c4" stroke-width="1.500"/><rect x="909" y="1041" width="19" height="3" fill="#f2c08a"/><rect x="909" y="1044" width="19" height="6" fill="#bcd8f0"/>
<!-- notepad -->
<path d="M984 1038L1005 1040L1002 1052H979Z" fill="#dfeaf4" stroke="#8fa6bf" stroke-width="1"/><path d="M984.500 1038L1005 1040L1004.300 1042.600L983.600 1040.800Z" fill="#5a7089"/>
<!-- yellow face -->
<circle cx="1059" cy="1056" r="16.500" fill="#f7df7a" stroke="#f3ecd0" stroke-width="2"/>
<circle cx="1059" cy="1057" r="9" fill="#fbf0b8"/>
<!-- task btn 3 -->
<rect x="1095.500" y="1033.500" width="160" height="20" rx="2.500" fill="url(#tb)" stroke="#f2f5f9" stroke-width="1"/>
<rect x="1104.500" y="1036" width="40.500" height="16" fill="#8cc63f"/>
<circle cx="1125" cy="1054" r="12" fill="none" stroke="#f4faea" stroke-width="2.500"/>
</svg>
</div>
</body></html>
